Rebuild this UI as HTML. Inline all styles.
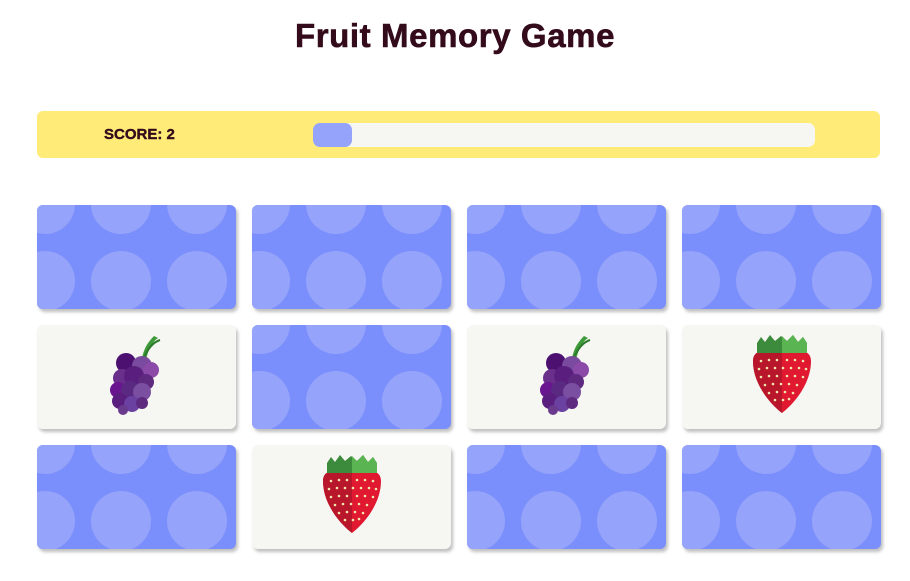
<!DOCTYPE html>
<html><head><meta charset="utf-8"><style>
body{margin:0;width:910px;height:581px;background:#fff;position:relative;overflow:hidden;font-family:"Liberation Sans",sans-serif}
h1{position:absolute;top:17px;left:0;width:910px;margin:0;text-align:center;font-size:33px;font-weight:bold;color:#330b1b;letter-spacing:0.6px;-webkit-text-stroke:0.6px #330b1b}
.bar{position:absolute;left:37px;top:111px;width:843px;height:47px;background:#ffec78;border-radius:6px}
.score{position:absolute;left:67px;top:15px;font-size:15px;font-weight:bold;color:#330b1b;-webkit-text-stroke:0.4px #330b1b}
.track{position:absolute;left:276px;top:12px;width:502px;height:24px;background:#f6f7f2;border-radius:7px}
.fill{position:absolute;left:0;top:0;width:39px;height:24px;background:#95a3fa;border-radius:7px}
.card{position:absolute;width:199px;height:104px;border-radius:6px;overflow:hidden;box-shadow:2px 3px 3px rgba(0,0,0,.25)}
.back{background:#7a8ffb}
.back i{position:absolute;width:60px;height:60px;border-radius:50%;background:#95a3fa}
.front{background:#f6f6f2}
.front svg{position:absolute;left:50%;top:50%;transform:translate(-50%,-50%)}
</style></head><body>
<h1>Fruit Memory Game</h1>
<div class="bar"><div class="score">SCORE: 2</div><div class="track"><div class="fill"></div></div></div>
<svg width="0" height="0" style="position:absolute">
<defs>
<symbol id="grape" viewBox="3 4 54 84">
<path d="M38 30 C40 20 44 14 50 8 L54 10 C48 14 44 22 42 32 Z" fill="#3f9a3a"/>
<path d="M40 30 C44 20 50 14 56 12" stroke="#2c7a2c" stroke-width="2" fill="none"/>
<circle cx="22" cy="35" r="10" fill="#4c1070"/>
<circle cx="38" cy="38" r="10" fill="#7a4a9e"/>
<circle cx="47" cy="42" r="8" fill="#8c4aa8"/>
<circle cx="18" cy="50" r="9" fill="#6a2f8a"/>
<circle cx="30" cy="48" r="10" fill="#5a1f7e"/>
<circle cx="42" cy="54" r="8" fill="#5e2a80"/>
<circle cx="14" cy="62" r="8" fill="#6a1590"/>
<circle cx="26" cy="62" r="9" fill="#5a2a82"/>
<circle cx="38" cy="64" r="9" fill="#7a4ea0"/>
<circle cx="16" cy="73" r="8" fill="#5a1f7e"/>
<circle cx="28" cy="76" r="8" fill="#6a40a0"/>
<circle cx="38" cy="75" r="6" fill="#5e2a80"/>
<circle cx="19" cy="82" r="5" fill="#6a3a8e"/>
</symbol>
<symbol id="straw" viewBox="5 1 60 80">
<path d="M6 28 C6 16 20 16 35 18 C50 16 64 16 64 28 C64 50 48 70 35 80 C22 70 6 50 6 28 Z" fill="#e01830"/>
<path d="M35 18 C20 16 6 16 6 28 C6 50 22 70 35 80 Z" fill="#b8162a"/>
<path d="M10 10 L14 4 L18 9 L23 2 L28 8 L34 3 L40 8 L46 2 L51 9 L56 4 L60 10 L60 20 L10 20 Z" fill="#3c8a3c"/>
<path d="M35 3 L40 8 L46 2 L51 9 L56 4 L60 10 L60 20 L35 20 Z" fill="#5bb452"/>
<g fill="#f2e6b0">
<circle cx="14" cy="28" r="1.3"/><circle cx="22" cy="27" r="1.3"/><circle cx="30" cy="27" r="1.3"/><circle cx="40" cy="27" r="1.3"/><circle cx="48" cy="27" r="1.3"/><circle cx="56" cy="28" r="1.3"/>
<circle cx="12" cy="36" r="1.3"/><circle cx="20" cy="35" r="1.3"/><circle cx="28" cy="35" r="1.3"/><circle cx="36" cy="35" r="1.3"/><circle cx="44" cy="35" r="1.3"/><circle cx="52" cy="35" r="1.3"/><circle cx="59" cy="36" r="1.3"/>
<circle cx="14" cy="44" r="1.3"/><circle cx="22" cy="43" r="1.3"/><circle cx="30" cy="43" r="1.3"/><circle cx="40" cy="43" r="1.3"/><circle cx="48" cy="43" r="1.3"/><circle cx="56" cy="44" r="1.3"/>
<circle cx="18" cy="52" r="1.3"/><circle cx="26" cy="51" r="1.3"/><circle cx="34" cy="51" r="1.3"/><circle cx="42" cy="51" r="1.3"/><circle cx="50" cy="52" r="1.3"/>
<circle cx="22" cy="60" r="1.3"/><circle cx="30" cy="59" r="1.3"/><circle cx="38" cy="59" r="1.3"/><circle cx="46" cy="60" r="1.3"/>
<circle cx="28" cy="67" r="1.3"/><circle cx="36" cy="67" r="1.3"/><circle cx="42" cy="66" r="1.3"/>
</g>
</symbol>
</defs></svg>

<div class="card back" style="left:37px;top:205px"><i style="left:-22px;top:-31px"></i><i style="left:54px;top:-31px"></i><i style="left:130px;top:-31px"></i><i style="left:-22px;top:46px"></i><i style="left:54px;top:46px"></i><i style="left:130px;top:46px"></i></div>
<div class="card back" style="left:252px;top:205px"><i style="left:-22px;top:-31px"></i><i style="left:54px;top:-31px"></i><i style="left:130px;top:-31px"></i><i style="left:-22px;top:46px"></i><i style="left:54px;top:46px"></i><i style="left:130px;top:46px"></i></div>
<div class="card back" style="left:467px;top:205px"><i style="left:-22px;top:-31px"></i><i style="left:54px;top:-31px"></i><i style="left:130px;top:-31px"></i><i style="left:-22px;top:46px"></i><i style="left:54px;top:46px"></i><i style="left:130px;top:46px"></i></div>
<div class="card back" style="left:682px;top:205px"><i style="left:-22px;top:-31px"></i><i style="left:54px;top:-31px"></i><i style="left:130px;top:-31px"></i><i style="left:-22px;top:46px"></i><i style="left:54px;top:46px"></i><i style="left:130px;top:46px"></i></div>

<div class="card front" style="left:37px;top:325px"><svg width="54" height="84" style="margin-left:-3px;margin-top:-3px"><use href="#grape"/></svg></div>
<div class="card back" style="left:252px;top:325px"><i style="left:-22px;top:-31px"></i><i style="left:54px;top:-31px"></i><i style="left:130px;top:-31px"></i><i style="left:-22px;top:46px"></i><i style="left:54px;top:46px"></i><i style="left:130px;top:46px"></i></div>
<div class="card front" style="left:467px;top:325px"><svg width="54" height="84" style="margin-left:-3px;margin-top:-3px"><use href="#grape"/></svg></div>
<div class="card front" style="left:682px;top:325px"><svg width="62" height="80" style="margin-top:-3px"><use href="#straw"/></svg></div>

<div class="card back" style="left:37px;top:445px"><i style="left:-22px;top:-31px"></i><i style="left:54px;top:-31px"></i><i style="left:130px;top:-31px"></i><i style="left:-22px;top:46px"></i><i style="left:54px;top:46px"></i><i style="left:130px;top:46px"></i></div>
<div class="card front" style="left:252px;top:445px"><svg width="62" height="80" style="margin-top:-3px"><use href="#straw"/></svg></div>
<div class="card back" style="left:467px;top:445px"><i style="left:-22px;top:-31px"></i><i style="left:54px;top:-31px"></i><i style="left:130px;top:-31px"></i><i style="left:-22px;top:46px"></i><i style="left:54px;top:46px"></i><i style="left:130px;top:46px"></i></div>
<div class="card back" style="left:682px;top:445px"><i style="left:-22px;top:-31px"></i><i style="left:54px;top:-31px"></i><i style="left:130px;top:-31px"></i><i style="left:-22px;top:46px"></i><i style="left:54px;top:46px"></i><i style="left:130px;top:46px"></i></div>
</body></html>
